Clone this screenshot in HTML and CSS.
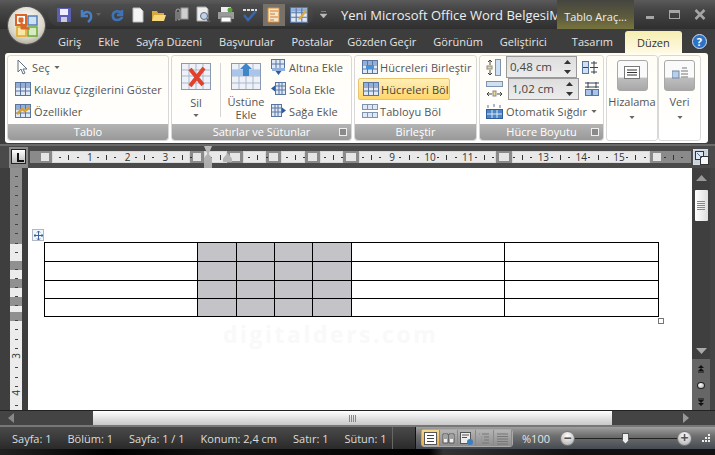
FILE: index.html
```html
<!DOCTYPE html>
<html lang="tr">
<head>
    <meta charset="UTF-8">
    <title>Yeni Microsoft Office Word Belgesi</title>
    <link rel="stylesheet" href="styles.css">
</head>
<body>
<svg class="defs">
    <symbol id="grid" viewBox="0 0 16 14">
        <rect x=".5" y=".5" width="15" height="13" fill="#dfe8f5" stroke="#5a74a0"/>
        <rect x="1" y="1" width="14" height="3" fill="#8fb0dc"/>
        <path d="M5.5 1v12M10.5 1v12M1 5h14M1 9h14" stroke="#5a74a0" fill="none"/>
    </symbol>
    <symbol id="bigtable" viewBox="0 0 30 27">
        <rect x=".5" y=".5" width="29" height="26" fill="#eef2f8" stroke="#8a9ab2"/>
        <path d="M8 1v25M15 1v25M22 1v25M1 7h28M1 13h28M1 20h28" stroke="#a9b7ca" fill="none"/>
    </symbol>
    <symbol id="caret" viewBox="0 0 7 4">
        <path d="M0 0h7L3.500 4z" fill="#666"/>
    </symbol>
    <symbol id="spinner" viewBox="0 0 7 14">
        <path d="M3.500 0L7 4H0zM0 10h7l-3.500 4z" fill="#333"/>
    </symbol>
</svg>

<div class="window">
    <header class="title-bar">
        <div class="office-btn">
            <svg width="26" height="26" viewBox="0 0 26 26">
                <rect x="2" y="2" width="10" height="10" fill="#fff" stroke="#d9662a" stroke-width="2"/>
                <rect x="14" y="3" width="9" height="9" fill="#cfe0f2" stroke="#4f81bd" stroke-width="1.500"/>
                <rect x="3" y="14" width="9" height="9" fill="#fbe6a4" stroke="#e0a91e" stroke-width="1.500"/>
                <rect x="14" y="14" width="9" height="9" fill="#d6ecc0" stroke="#6aa83a" stroke-width="1.500"/>
                <path d="M5 5h4v4H5zM7 9v7h9" fill="#d9662a" stroke="#d9662a"/>
            </svg>
        </div>
        <div class="qat">
            <svg width="16" height="16" viewBox="0 0 16 16"><rect x="1" y="1" width="14" height="14" rx="1" fill="#5a5fb4"/><rect x="4" y="2" width="8" height="6" fill="#eef"/><rect x="5" y="10" width="6" height="5" fill="#ccd"/></svg>
            <svg width="16" height="16" viewBox="0 0 16 16"><path d="M4 3v6h6M4 9c3-6 10-5 9 2-.3 2-2 3-3 4" fill="none" stroke="#4a7fc4" stroke-width="2.500"/></svg>
            <svg class="qat-caret" width="5" height="3"><use href="#caret"/></svg>
            <svg class="qat-redo" width="16" height="16" viewBox="0 0 16 16"><path d="M12 3v5H7M12 8C9 2 2 4 3 10c.3 2 2 3 4 3 3 0 5-2 5-3" fill="none" stroke="#3f73b8" stroke-width="2.500"/></svg>
            <svg width="14" height="16" viewBox="0 0 14 16"><path d="M2 1h7l3 3v11H2z" fill="#f4f4f4" stroke="#bbb"/></svg>
            <svg width="16" height="16" viewBox="0 0 16 16"><path d="M1 4h5l1 2h6v8H1z" fill="#d9a93c"/><path d="M3 8h12l-2 6H1z" fill="#f6d77a"/></svg>
            <svg width="17" height="17" viewBox="0 0 17 17"><path d="M4 15V5a2 2 0 0 1 4 0v8a1 1 0 0 1-2 0V6" fill="none" stroke="#aaa"/><rect x="9" y="2" width="7" height="11" fill="#cfcfcf" stroke="#999"/></svg>
            <svg width="17" height="17" viewBox="0 0 17 17"><path d="M2 1h9l2 2v12H2z" fill="#eee" stroke="#aaa"/><circle cx="9" cy="10" r="3.500" fill="#bcd4ea" stroke="#667"/><path d="M12 13l3 3" stroke="#556" stroke-width="2"/></svg>
            <svg width="18" height="17" viewBox="0 0 18 17"><rect x="4" y="1" width="10" height="6" fill="#eee"/><rect x="1" y="6" width="16" height="7" fill="#9a9a9a"/><rect x="4" y="11" width="10" height="5" fill="#fff" stroke="#777"/><circle cx="13" cy="4" r="2.500" fill="#5a9e3c"/></svg>
            <svg width="18" height="17" viewBox="0 0 18 17"><path d="M3 9l4 5 8-9" fill="none" stroke="#3b66ad" stroke-width="2.500"/><path d="M2 4h14" stroke="#ddd" stroke-width="2" stroke-dasharray="3 1"/></svg>
            <span class="qat-on">
                <svg width="14" height="16" viewBox="0 0 14 16"><path d="M1 1h11v14H1z" fill="#efe6cf" stroke="#e08a2a"/><path d="M3 4h8M3 7h5M3 10h8M3 13h4" stroke="#d9782a"/></svg>
            </span>
            <svg width="18" height="16" viewBox="0 0 18 16"><use href="#grid"/><path d="M9 11l6-8 2 1-6 8-3 1z" fill="#e0a73a"/></svg>
        </div>
        <svg class="qat-more" width="7" height="8" viewBox="0 0 7 8"><path d="M1 .5h5M0 3h7L3.500 7z" fill="#bbb" stroke="#bbb" stroke-width=".5"/></svg>
        <div class="doc-title">Yeni Microsoft Office Word BelgesiM</div>
        <div class="context-title">Tablo Araç...</div>
        <div class="win-btns">
            <span class="win-min"></span>
            <span class="win-max"></span>
            <svg width="12" height="11" viewBox="0 0 12 11"><path d="M1.500 1l9 9M10.500 1l-9 9" stroke="#a5a5a5" stroke-width="2.500"/></svg>
        </div>
    </header>

    <nav class="tabs">
        <span class="tab t-home">Giriş</span>
        <span class="tab">Ekle</span>
        <span class="tab">Sayfa Düzeni</span>
        <span class="tab">Başvurular</span>
        <span class="tab">Postalar</span>
        <span class="tab t-review">Gözden Geçir</span>
        <span class="tab">Görünüm</span>
        <span class="tab">Geliştirici</span>
        <span class="tab t-design">Tasarım</span>
        <span class="tab t-layout">Düzen</span>
        <span class="help">?</span>
    </nav>

    <section class="ribbon">
        <div class="group g-table">
            <div class="group-body list">
                <div class="row"><svg width="14" height="16" viewBox="0 0 14 16"><path d="M3 1v12l3-3 2 5 2-1-2-4h4z" fill="#fff" stroke="#5f6f86"/></svg><span>Seç</span><svg class="small-caret" width="6" height="3"><use href="#caret"/></svg></div>
                <div class="row"><svg width="16" height="14"><use href="#grid"/></svg><span>Kılavuz Çizgilerini Göster</span></div>
                <div class="row"><svg width="16" height="14" viewBox="0 0 16 14"><use href="#grid"/><path d="M2 10l5-5 3 2 5-4" stroke="#d8a02c" stroke-width="2.500" fill="none"/></svg><span>Özellikler</span></div>
            </div>
            <div class="group-label">Tablo</div>
        </div>

        <div class="group g-rows">
            <div class="group-body rows-body">
                <div class="big b-del">
                    <svg width="30" height="27" viewBox="0 0 30 27"><use href="#bigtable"/><path d="M9 6l13 16M23 5L9 23" stroke="#e0412c" stroke-width="4"/></svg>
                    <div class="big-text">Sil</div>
                    <svg class="big-caret" width="6" height="3"><use href="#caret"/></svg>
                </div>
                <div class="sep"></div>
                <div class="big b-above">
                    <svg width="30" height="27" viewBox="0 0 30 27"><use href="#bigtable"/><rect x="1" y="7" width="28" height="6" fill="#a9c6ea"/><path d="M15 0l6 6h-3v7h-6V6H9z" fill="#3f86c9"/></svg>
                    <div class="big-text">Üstüne Ekle</div>
                </div>
                <div class="list">
                    <div class="row"><svg width="15" height="16" viewBox="0 0 15 16"><rect x=".5" y=".5" width="13" height="9" fill="#dfe8f5" stroke="#5a74a0"/><path d="M5 1v8M9 1v8M1 5h12" stroke="#5a74a0"/><rect x="1" y="9" width="13" height="3" fill="#8fb0dc"/><path d="M7.500 16l-3-4h6z" fill="#2f5c9e"/></svg><span>Altına Ekle</span></div>
                    <div class="row"><svg width="15" height="14" viewBox="0 0 15 14"><rect x="4.500" y=".5" width="10" height="12" fill="#dfe8f5" stroke="#5a74a0"/><path d="M8 1v11M11 1v11M5 4h9M5 8h9" stroke="#5a74a0"/><path d="M0 6.500l4-3v6z" fill="#2f5c9e"/></svg><span>Sola Ekle</span></div>
                    <div class="row"><svg width="15" height="14" viewBox="0 0 15 14"><rect x=".5" y=".5" width="10" height="12" fill="#dfe8f5" stroke="#5a74a0"/><path d="M4 1v11M7 1v11M1 4h9M1 8h9" stroke="#5a74a0"/><path d="M15 6.500l-4-3v6z" fill="#2f5c9e"/></svg><span>Sağa Ekle</span></div>
                </div>
            </div>
            <div class="group-label">Satırlar ve Sütunlar<i class="launcher"></i></div>
        </div>

        <div class="group g-merge">
            <div class="group-body list">
                <div class="row"><svg width="16" height="14" viewBox="0 0 16 14"><use href="#grid"/><rect x="4" y="5" width="8" height="4" fill="#4a90d8"/></svg><span>Hücreleri Birleştir</span></div>
                <div class="row row-on"><svg width="16" height="14"><use href="#grid"/></svg><span>Hücreleri Böl</span></div>
                <div class="row"><svg width="16" height="14" viewBox="0 0 16 14"><rect x=".5" y=".5" width="15" height="5" fill="#dfe8f5" stroke="#7f92ae"/><rect x=".5" y="8.500" width="15" height="5" fill="#dfe8f5" stroke="#7f92ae"/><path d="M5.500 1v4M10.500 1v4M5.500 9v4M10.500 9v4" stroke="#7f92ae"/></svg><span>Tabloyu Böl</span></div>
            </div>
            <div class="group-label">Birleştir</div>
        </div>

        <div class="group g-size">
            <div class="group-body size-body">
                <div class="spin-row">
                    <svg width="15" height="17" viewBox="0 0 15 17"><path d="M4 1v5M2 3l2-2 2 2M4 16v-5M2 14l2 2 2-2" stroke="#444" fill="none"/><rect x="1" y="7" width="5" height="3" fill="#e8d890" stroke="#888"/><rect x="9.500" y=".5" width="5" height="16" fill="#cfe0f2" stroke="#7f92ae"/></svg>
                    <div class="spin">0,48 cm<svg class="spin-btns" width="7" height="14"><use href="#spinner"/></svg></div>
                    <svg width="16" height="15" viewBox="0 0 16 15"><rect x=".5" y="1.500" width="6" height="12" fill="#cfe0f2" stroke="#5a74a0"/><path d="M1 7.500h5M8 7.500h8M12 1v13M9 3h6M9 12h6" stroke="#345" fill="none"/></svg>
                </div>
                <div class="spin-row">
                    <svg width="17" height="16" viewBox="0 0 17 16"><rect x=".5" y=".5" width="16" height="5" fill="#cfe0f2" stroke="#7f92ae"/><path d="M1 13h5M11 13h5M3 11l-2 2 2 2M14 11l2 2-2 2" stroke="#444" fill="none"/><rect x="7" y="10" width="3" height="5" fill="#e8d890" stroke="#888"/></svg>
                    <div class="spin">1,02 cm<svg class="spin-btns" width="7" height="14"><use href="#spinner"/></svg></div>
                    <svg width="16" height="15" viewBox="0 0 16 15"><path d="M1 1h14M1 5h14M4 0v6M12 0v6" stroke="#345" fill="none"/><rect x="1.500" y="7.500" width="6" height="6" fill="#a9c6ea" stroke="#5a74a0"/><rect x="8.500" y="7.500" width="6" height="6" fill="#a9c6ea" stroke="#5a74a0"/></svg>
                </div>
                <div class="row fit-row"><svg width="17" height="15" viewBox="0 0 17 15"><rect x=".5" y="5.500" width="16" height="9" fill="#4d86c4" stroke="#2f5c9e"/><path d="M6 6v8M11 6v8M1 10h15" stroke="#dfe8f5"/><path d="M2 1v3M8 0v3M14 1v3" stroke="#5a74a0"/></svg><span>Otomatik Sığdır</span><svg class="small-caret" width="6" height="3"><use href="#caret"/></svg></div>
            </div>
            <div class="group-label">Hücre Boyutu<i class="launcher"></i></div>
        </div>

        <div class="group g-plain g-align">
            <div class="drop">
                <span class="drop-face"><svg width="16" height="13" viewBox="0 0 16 13"><rect x=".5" y=".5" width="15" height="12" fill="#fff" stroke="#777"/><path d="M3 4h10M3 6.500h10M3 9h10" stroke="#333"/></svg></span>
            </div>
            <div class="big-text">Hizalama</div>
            <svg class="big-caret" width="6" height="3"><use href="#caret"/></svg>
        </div>
        <div class="group g-plain g-data">
            <div class="drop">
                <span class="drop-face"><svg width="16" height="13" viewBox="0 0 16 13"><rect x="0" y="5" width="7" height="7" fill="#b9cfe8" stroke="#6c86a8"/><path d="M9 5h7M9 8h7M9 11h7M10 2h5" stroke="#777"/></svg></span>
            </div>
            <div class="big-text">Veri</div>
            <svg class="big-caret" width="6" height="3"><use href="#caret"/></svg>
        </div>
    </section>

    <div class="ruler-bar">
        <div class="tab-stop"><span class="tab-l"></span></div>
        <div class="h-ruler">
            <div class="segs">
                <span class="seg seg-g s22 mark"></span>
                <span class="seg s138"></span>
                <span class="seg seg-g s14 mark"></span>
                <span class="seg s23"></span>
                <span class="seg seg-g s16 mark"></span>
                <span class="seg s23"></span>
                <span class="seg seg-g s15 mark"></span>
                <span class="seg s24"></span>
                <span class="seg seg-g s15 mark"></span>
                <span class="seg s23"></span>
                <span class="seg seg-g s16 mark"></span>
                <span class="seg s137"></span>
                <span class="seg seg-g s16 mark"></span>
                <span class="seg s138"></span>
                <span class="seg seg-g s41 mark"></span>
            </div>
            <div class="ticks">
                <span><i></i><u></u><i></i><b>1</b></span>
                <span><i></i><u></u><i></i><b>2</b></span>
                <span><i></i><u></u><i></i><b>3</b></span>
                <span><i></i><u></u><i></i><b></b></span>
                <span><i></i><u></u><i></i><b></b></span>
                <span><i></i><u></u><i></i><b></b></span>
                <span><i></i><u></u><i></i><b></b></span>
                <span><i></i><u></u><i></i><b></b></span>
                <span><i></i><u></u><i></i><b>9</b></span>
                <span><i></i><u></u><i></i><b>10</b></span>
                <span><i></i><u></u><i></i><b>11</b></span>
                <span><i></i><u></u><i></i><b></b></span>
                <span><i></i><u></u><i></i><b>13</b></span>
                <span><i></i><u></u><i></i><b>14</b></span>
                <span><i></i><u></u><i></i><b>15</b></span>
                <span><i></i><u></u><i></i><b></b></span>
                <span><i></i><u></u><i></i><b></b></span>
            </div>
            <span class="indent"></span>
            <span class="indent-r"></span>
        </div>
        <div class="split-tool">
            <svg width="14" height="14" viewBox="0 0 14 14"><rect x=".5" y=".5" width="8" height="8" fill="#dfe6ee" stroke="#333"/><rect x="5.500" y="5.500" width="8" height="8" fill="#f4f7fa" stroke="#333"/><path d="M2 2l5 5" stroke="#4a6f9c"/></svg>
        </div>
    </div>

    <main class="work">
        <div class="v-ruler">
            <span class="vs vs-g v76"></span>
            <span class="vs v16"></span>
            <span class="vs vs-g v9"></span>
            <span class="vs v9"></span>
            <span class="vs vs-g v9"></span>
            <span class="vs v9"></span>
            <span class="vs vs-g v9"></span>
            <span class="vs v6"></span>
            <span class="vs vs-g v9"></span>
            <span class="vs v-last"><b class="v3">3</b><b class="v4">4</b></span>
        </div>
        <div class="page">
            <span class="move-handle">
                <svg width="9" height="9" viewBox="0 0 9 9"><path d="M4.500 0v9M0 4.500h9M3 1.500L4.500 0 6 1.500M3 7.500L4.500 9 6 7.500M1.500 3L0 4.500 1.500 6M7.500 3L9 4.500 7.500 6" fill="none" stroke="#3a62a0"/></svg>
            </span>
            <table class="doc-table">
                <tr class="r1"><td class="c-wide"></td><td class="sel c1"></td><td class="sel c2"></td><td class="sel c2"></td><td class="sel c1"></td><td class="c-wide"></td><td class="c-last"></td></tr>
                <tr class="r1"><td></td><td class="sel"></td><td class="sel"></td><td class="sel"></td><td class="sel"></td><td></td><td></td></tr>
                <tr class="r2"><td></td><td class="sel"></td><td class="sel"></td><td class="sel"></td><td class="sel"></td><td></td><td></td></tr>
                <tr class="r2"><td></td><td class="sel"></td><td class="sel"></td><td class="sel"></td><td class="sel"></td><td></td><td></td></tr>
            </table>
            <span class="size-handle"></span>
            <div class="watermark">digitalders.com</div>
        </div>
        <aside class="v-scroll">
            <svg class="arrow-up" width="11" height="6"><path d="M5.500 0l5.500 6H0z" fill="#999"/></svg>
            <div class="v-thumb"><i></i></div>
            <div class="v-end">
                <span class="v-down"><svg width="11" height="6"><path d="M0 0h11L5.500 6z" fill="#aaa"/></svg></span>
                <svg width="8" height="8" viewBox="0 0 8 8"><path d="M4 0l3 3H1zM4 3l3 3H1z" fill="#111"/><path d="M1 7h6" stroke="#111"/></svg>
                <span class="v-dot"></span>
                <svg width="8" height="8" viewBox="0 0 8 8"><path d="M1 1h6" stroke="#111"/><path d="M1 2h6L4 5zM1 5h6L4 8z" fill="#111"/></svg>
            </div>
        </aside>
    </main>

    <div class="h-scroll">
        <svg class="arrow-l" width="6" height="10"><path d="M6 0v10L0 5z" fill="#888"/></svg>
        <div class="h-thumb"><i></i></div>
        <svg class="arrow-r" width="6" height="10"><path d="M0 0v10l6-5z" fill="#999"/></svg>
    </div>

    <footer class="status">
        <div class="status-left">
            <span>Sayfa: 1</span>
            <span>Bölüm: 1</span>
            <span>Sayfa: 1 / 1</span>
            <span>Konum: 2,4 cm</span>
            <span>Satır: 1</span>
            <span>Sütun: 1</span>
        </div>
        <div class="status-right">
            <div class="views">
                <span class="view view-on"><svg width="13" height="13" viewBox="0 0 13 13"><rect x=".5" y=".5" width="12" height="12" fill="#fff" stroke="#555"/><path d="M3 3.500h7M3 6.500h7M3 9.500h7" stroke="#444"/></svg></span>
                <span class="view"><svg width="13" height="13" viewBox="0 0 13 13"><path d="M1 2h5v9H1zM7 2h5v9H7z" fill="#eee" stroke="#555"/><path d="M2 4h3M2 6h3M8 4h3M8 6h3" stroke="#555"/></svg></span>
                <span class="view"><svg width="13" height="13" viewBox="0 0 13 13"><rect x=".5" y=".5" width="10" height="11" fill="#eee" stroke="#555"/><circle cx="10" cy="10" r="3" fill="#3b7fc0"/><path d="M2 3h7M2 5.500h5" stroke="#555"/></svg></span>
                <span class="view"><svg width="13" height="13" viewBox="0 0 13 13"><path d="M4 2h7M6 5h5M6 8h5M4 11h7" stroke="#777"/><path d="M1 2h1M3 5h1M3 8h1" stroke="#888"/></svg></span>
                <span class="view"><svg width="13" height="13" viewBox="0 0 13 13"><path d="M1 2h11M1 4.500h11M1 7h11M1 9.500h11M1 12h11" stroke="#777"/></svg></span>
            </div>
            <span class="zoom-pct">%100</span>
            <div class="zoom">
                <span class="zoom-btn">&#8722;</span>
                <div class="zoom-track"><span class="zoom-thumb"></span></div>
                <span class="zoom-btn">+</span>
            </div>
            <svg class="grip" width="10" height="10" viewBox="0 0 10 10"><path d="M7 1h2v2H7zM4 4h2v2H4zM7 4h2v2H7zM1 7h2v2H1zM4 7h2v2H4zM7 7h2v2H7z" fill="#eee"/></svg>
        </div>
    </footer>
    <div class="desk"></div>
</div>
</body>
</html>
```

FILE: styles.css
```css
* {
    box-sizing: border-box;
}
html, body {
    margin: 0;
    height: 100%;
    overflow: hidden;
}
body {
    background: #111;
    font-family: "Open Sans", "Liberation Sans", sans-serif;
    font-size: 11px;
    color: #555;
}
svg {
    display: block;
    flex: none;
}
.defs {
    display: none;
}
.window {
    width: 715px;
    height: 455px;
    display: flex;
    flex-direction: column;
    background: #3d3d3d;
    position: relative;
}

/* baslik */
.title-bar {
    height: 29px;
    flex: none;
    display: flex;
    align-items: center;
    padding-left: 48px;
    background: linear-gradient(#5a5a5a, #474747 30%, #2f2f2f);
    position: relative;
}
.office-btn {
    position: absolute;
    left: 8px;
    top: 7px;
    width: 37px;
    height: 37px;
    border-radius: 50%;
    background: radial-gradient(circle at 50% 35%, #fff, #d9d4c8 60%, #8f8a7e);
    box-shadow: 0 0 0 1px #555;
    display: flex;
    align-items: center;
    justify-content: center;
    z-index: 2;
}
.qat {
    width: 265px;
    height: 22px;
    border-radius: 11px;
    background: linear-gradient(#4d4d4d, #3a3a3a);
    display: flex;
    align-items: center;
    gap: 5.500px;
    padding-left: 8px;
}
.qat-caret {
    margin-left: -3px;
}
.qat-redo {
    margin-left: 3px;
}
.qat-on {
    width: 22px;
    height: 22px;
    background: #77716a;
    display: flex;
    align-items: center;
    justify-content: center;
    margin: 0 -1px;
}
.qat-more {
    margin-left: 7px;
}
.doc-title {
    margin-left: 14px;
    font-size: 13px;
    color: #eee;
    width: 216px;
    white-space: nowrap;
}
.context-title {
    width: 77px;
    height: 29px;
    line-height: 33px;
    text-align: center;
    color: #eee;
    font-size: 11px;
    background: linear-gradient(#454540, #5e5c3c 60%, #77743f);
}
.win-btns {
    display: flex;
    align-items: center;
    margin-left: 12px;
    gap: 14px;
}
.win-min {
    width: 8px;
    height: 3px;
    margin-top: 6px;
    background: #a5a5a5;
}
.win-max {
    width: 11px;
    height: 9px;
    border: 1px solid #a5a5a5;
    border-top-width: 3px;
    margin-left: 1px;
}

/* sekmeler */
.tabs {
    height: 24px;
    flex: none;
    display: flex;
    align-items: center;
    padding-left: 58px;
    gap: 17px;
    color: #e4e4e4;
    background: #3d3d3d;
}
.tab {
    white-space: nowrap;
}
.t-review {
    margin-left: -3px;
}
.t-design {
    margin-left: 8px;
}
.t-layout {
    width: 57px;
    height: 23px;
    margin: 1px 0 -1px -5px;
    text-align: center;
    line-height: 24px;
    color: #333;
    border-radius: 3px 3px 0 0;
    background: linear-gradient(#f6eeb0, #fffbe8);
}
.help {
    width: 15px;
    height: 15px;
    margin-left: -7px;
    border-radius: 50%;
    background: #2f72c4;
    border: 1px solid #cfe0f5;
    color: #fff;
    font-size: 11px;
    font-weight: 700;
    line-height: 13px;
    text-align: center;
}

/* serit */
.ribbon {
    height: 90px;
    flex: none;
    margin-left: 5px;
    margin-right: 7px;
    padding: 3px 0 3px 3px;
    display: flex;
    gap: 4px;
    background: linear-gradient(#fffdf2, #fff 30%);
    border-radius: 3px;
}
.group {
    display: flex;
    flex-direction: column;
    border-radius: 3px;
    background: linear-gradient(#fffdf6, #fff);
    box-shadow: 0 0 0 1px #d8d8d8;
}
.g-table {
    width: 160px;
}
.g-rows {
    width: 179px;
}
.g-merge {
    width: 121px;
}
.g-size {
    width: 123px;
}
.group-body {
    flex: 1;
}
.group-label {
    height: 16px;
    flex: none;
    line-height: 15px;
    text-align: center;
    color: #fff;
    font-size: 11px;
    background: linear-gradient(#b4b4b4, #999);
    border-radius: 0 0 3px 3px;
    position: relative;
}
.launcher {
    position: absolute;
    right: 4px;
    top: 4px;
    width: 8px;
    height: 8px;
    border: 1px solid #eee;
    background: #8a8a8a;
}
.list {
    display: flex;
    flex-direction: column;
    justify-content: flex-start;
}
.row {
    height: 22px;
    display: flex;
    align-items: center;
    gap: 3px;
    padding-left: 7px;
    white-space: nowrap;
}
.row span {
    letter-spacing: .1px;
}
.small-caret {
    margin-left: 1px;
}
.row-on {
    margin: 0 26px 0 3px;
    padding-left: 4px;
    border: 1px solid #e8c670;
    border-radius: 2px;
    background: linear-gradient(#ffefb8, #ffd66b);
    color: #444;
}
.g-merge .row span {
    margin-left: -1px;
}
.rows-body {
    display: flex;
}
.b-del {
    width: 48px;
}
.b-above {
    width: 50px;
}
.big {
    display: flex;
    flex-direction: column;
    align-items: center;
    padding-top: 7px;
}
.big-text {
    text-align: center;
    line-height: 13px;
    margin-top: 5px;
}
.b-del .big-text {
    margin-top: 6px;
}
.big-caret {
    margin-top: 5px;
}
.sep {
    width: 1px;
    height: 54px;
    margin-top: 7px;
    background: #d4d4d4;
}
.rows-body .row {
    padding-left: 0;
}
.rows-body .list {
    margin-left: 0;
}
.size-body {
    padding-top: 0;
}
.spin-row {
    height: 22px;
    display: flex;
    align-items: center;
    padding-left: 6px;
    gap: 5px;
}
.spin {
    width: 71px;
    height: 22px;
    padding-left: 3px;
    border: 1px solid #9a9a9a;
    background: linear-gradient(#dedede, #ececec);
    line-height: 20px;
    color: #444;
    font-size: 11.500px;
    position: relative;
}
.spin-row + .spin-row .spin {
    margin-top: -1px;
}
.spin-btns {
    position: absolute;
    right: 5px;
    top: 3px;
}
.fit-row {
    padding-left: 6px;
    font-size: 11px;
}
.g-plain {
    align-items: center;
    padding-top: 4px;
}
.g-align {
    width: 50px;
}
.g-data {
    width: 41px;
    margin-left: -2px;
}
.drop {
    width: 31px;
    height: 31px;
    border: 1px solid #a8a8a8;
    border-radius: 3px;
    background: linear-gradient(#fafafa 55%, #bdbdbd 60%, #a8a8a8);
}
.drop-face {
    display: flex;
    justify-content: center;
    padding-top: 5px;
}
.g-plain .big-text {
    margin-top: 4px;
}
.g-plain .big-caret {
    margin-top: 8px;
}

/* cetvel */
.ruler-bar {
    height: 24px;
    flex: none;
    margin-top: 1px;
    display: flex;
    align-items: center;
    padding-left: 9px;
    background: #4a4a4a;
    border-top: 2px solid #6a6a6a;
}
.tab-stop {
    width: 19px;
    height: 21px;
    flex: none;
    padding: 2px;
    background: #8a8a8a;
}
.tab-l {
    display: block;
    width: 15px;
    height: 15px;
    border: 1px solid #222;
    background: linear-gradient(#fff, #bbb);
    position: relative;
}
.tab-l:after {
    content: "";
    position: absolute;
    left: 5px;
    top: 3px;
    width: 5px;
    height: 7px;
    border-left: 2px solid #111;
    border-bottom: 2px solid #111;
}
.h-ruler {
    width: 662px;
    height: 12px;
    margin-left: 2px;
    position: relative;
}
.segs {
    display: flex;
    height: 100%;
}
.seg {
    display: block;
    flex: none;
    background: #e9e9e9;
    box-shadow: inset 0 0 0 1px #d8d8d8;
}
.seg-g {
    background: #8a8a8a;
    box-shadow: none;
}
.mark {
    background-image: radial-gradient(circle, #ececec 0.700px, transparent 0.800px);
    background-size: 2px 2px;
    background-position: center;
    background-clip: content-box;
    padding: 2px 3px;
}
.s138 { width: 138px; }
.s137 { width: 137px; }
.s14 { width: 14px; }
.s15 { width: 15px; }
.s16 { width: 16px; }
.s23 { width: 23px; }
.s24 { width: 24px; }
.s22 { width: 22px; }
.s41 { width: 41px; }
.s22.mark { padding-left: 11px; padding-right: 3px; }
.s41.mark { padding-right: 30px; }
.seg-g.mark {
    background-color: transparent;
    background-clip: border-box;
    background-image: radial-gradient(circle, #ececec 0.700px, transparent 0.800px), linear-gradient(#8a8a8a, #8a8a8a);
    background-size: 2px 2px, auto;
    background-origin: content-box, border-box;
    background-clip: content-box, border-box;
}
.ticks {
    position: absolute;
    left: 22px;
    top: 0;
    display: flex;
    height: 12px;
}
.ticks span {
    width: 37.800px;
    flex: none;
    height: 12px;
    display: flex;
    align-items: center;
    justify-content: space-evenly;
    padding-right: 4px;
    position: relative;
}
.ticks i {
    width: 2px;
    height: 1px;
    background: #333;
}
.ticks u {
    width: 1px;
    height: 5px;
    background: #333;
}
.ticks b {
    position: absolute;
    right: -8px;
    width: 16px;
    text-align: center;
    font-weight: 400;
    font-size: 10px;
    line-height: 12px;
    color: #333;
}
.indent {
    position: absolute;
    left: 174px;
    top: -5px;
    width: 8px;
    height: 22px;
    background: linear-gradient(#bbb, #aaa);
    clip-path: polygon(0 0, 100% 0, 60% 35%, 100% 55%, 100% 100%, 0 100%, 0 55%, 40% 35%);
}
.indent-r {
    position: absolute;
    left: 193px;
    top: 2px;
    width: 9px;
    height: 9px;
    background: #b5b5b5;
    clip-path: polygon(50% 0, 100% 60%, 100% 100%, 0 100%, 0 60%);
}
.split-tool {
    width: 15px;
    height: 16px;
    margin-left: 1px;
    padding: 1px;
    background: #c8d3df;
    border: 1px solid #ddd;
}

/* belge */
.work {
    height: 242px;
    flex: none;
    display: flex;
    background: #444;
}
.v-ruler {
    width: 28px;
    flex: none;
    padding-left: 10px;
    padding-right: 6px;
    display: flex;
    flex-direction: column;
    background: #3e3e3e;
}
.vs {
    display: block;
    flex: none;
    background-color: #ececec;
    background-image: repeating-linear-gradient(transparent 0 8.450px, #444 8.450px 9.450px);
    background-size: 3px 100%;
    background-position: center;
    background-repeat: no-repeat;
    position: relative;
}
.vs-g {
    background-color: #909090;
}
.v76 { height: 76px; }
.v16 { height: 17px; }
.v9 { height: 9px; }
.v6 { height: 6px; }
.v-last { flex: 1; }
.v-last b {
    position: absolute;
    left: 0;
    width: 12px;
    text-align: center;
    font-weight: 400;
    font-size: 10px;
    line-height: 12px;
    color: #333;
    background: #ececec;
    transform: rotate(-90deg);
}
.v3 { top: 29px; }
.v4 { top: 66px; }
.page {
    flex: 1;
    background: #fff;
    padding: 74px 0 0 16px;
    position: relative;
}
.move-handle {
    position: absolute;
    left: 4px;
    top: 61px;
    width: 12px;
    height: 12px;
    padding: 1px;
    border: 1px solid #b0b8c4;
    background: #f2f6fb;
}
.doc-table {
    border-collapse: collapse;
    table-layout: fixed;
    width: 615px;
}
.doc-table td {
    border: 1px solid #000;
    padding: 0;
}
.r1 { height: 19px; }
.r2 { height: 18px; }
.c-wide { width: 153px; }
.c1 { width: 39px; }
.c2 { width: 38px; }
.c-last { width: 154px; }
.sel {
    background: #c4c4c8;
}
.size-handle {
    position: absolute;
    left: 630px;
    top: 150px;
    width: 6px;
    height: 6px;
    border: 1px solid #777;
    background: #fff;
}
.watermark {
    position: absolute;
    left: 195px;
    top: 150px;
    font-size: 23px;
    font-weight: 700;
    letter-spacing: 2.500px;
    color: #f9f9f9;
}
.v-scroll {
    width: 18px;
    flex: none;
    display: flex;
    flex-direction: column;
    align-items: center;
    margin-right: 5px;
    background: #3f3f3f;
}
.arrow-up {
    margin-top: 7px;
}
.v-thumb {
    width: 13px;
    height: 31px;
    margin-top: 9px;
    border-radius: 1px;
    background: linear-gradient(90deg, #fff, #ddd);
    display: flex;
    align-items: center;
    justify-content: center;
}
.v-thumb i {
    width: 8px;
    height: 9px;
    background: repeating-linear-gradient(#888 0 1px, transparent 1px 2px);
}
.v-end {
    margin-top: auto;
    width: 18px;
    height: 66px;
    background: #666;
    display: flex;
    flex-direction: column;
    align-items: center;
    gap: 9px;
    padding-bottom: 4px;
    justify-content: flex-end;
}
.v-down {
    width: 18px;
    height: 16px;
    margin-bottom: -3px;
    background: #3f3f3f;
    display: flex;
    align-items: center;
    justify-content: center;
}
.v-dot {
    width: 8px;
    height: 8px;
    border-radius: 50%;
    border: 1px solid #222;
    background: radial-gradient(circle at 40% 35%, #fff, #999);
}
.h-scroll {
    height: 17px;
    flex: none;
    display: flex;
    align-items: center;
    padding: 0 26px 0 8px;
    background: #444;
    border-top: 1px solid #222;
    border-bottom: 2px solid #777;
}
.h-thumb {
    width: 519px;
    height: 14px;
    margin-left: 79px;
    background: linear-gradient(#fff, #ddd 60%, #c8c8c8);
    display: flex;
    align-items: center;
    justify-content: center;
}
.h-thumb i {
    width: 7px;
    height: 7px;
    background: repeating-linear-gradient(90deg, #888 0 1px, transparent 1px 2px);
}
.arrow-r {
    margin-left: auto;
}

/* durum cubugu */
.status {
    height: 22px;
    flex: none;
    display: flex;
    background: linear-gradient(#4a4a4a, #2a2a2a);
    color: #ddd;
}
.status-left {
    width: 415px;
    display: flex;
    align-items: center;
    padding-left: 12px;
    gap: 16px;
    background: linear-gradient(90deg, transparent 392px, #666 392px, #666 393px, transparent 393px);
}
.status-right {
    flex: 1;
    display: flex;
    align-items: center;
    padding-left: 5px;
    border-left: 1px solid #111;
    background: linear-gradient(#a0a0a0, #6f6f6f 40%, #454b52);
}
.views {
    display: flex;
    height: 18px;
    border: 1px solid #aaa;
    border-radius: 3px;
    background: linear-gradient(#b5b5b5, #8d8d8d);
}
.view {
    width: 18px;
    display: flex;
    align-items: center;
    justify-content: center;
    border-right: 1px solid #8a8a8a;
}
.view-on {
    background: linear-gradient(#f5d98a, #e9a94a);
}
.zoom-pct {
    margin-left: 9px;
    color: #e6e6e6;
    font-size: 11px;
}
.zoom {
    display: flex;
    align-items: center;
    margin-left: 10px;
}
.zoom-btn {
    width: 15px;
    height: 15px;
    border-radius: 50%;
    background: radial-gradient(circle at 50% 30%, #fff, #a8a8a8);
    border: 1px solid #777;
    color: #555;
    font-size: 14px;
    font-weight: 700;
    line-height: 12px;
    text-align: center;
}
.zoom-track {
    width: 102px;
    height: 1px;
    background: #222;
    position: relative;
}
.zoom-thumb {
    position: absolute;
    left: 47px;
    top: -5px;
    width: 7px;
    height: 11px;
    background: #eee;
    border: 1px solid #555;
    clip-path: polygon(0 0, 100% 0, 100% 65%, 50% 100%, 0 65%);
}
.grip {
    margin-left: 9px;
}
.desk {
    flex: 1;
    background: linear-gradient(90deg, #222, #000 15%, #111 30%, #000 60%, #333 62%, #111 80%);
}
```
